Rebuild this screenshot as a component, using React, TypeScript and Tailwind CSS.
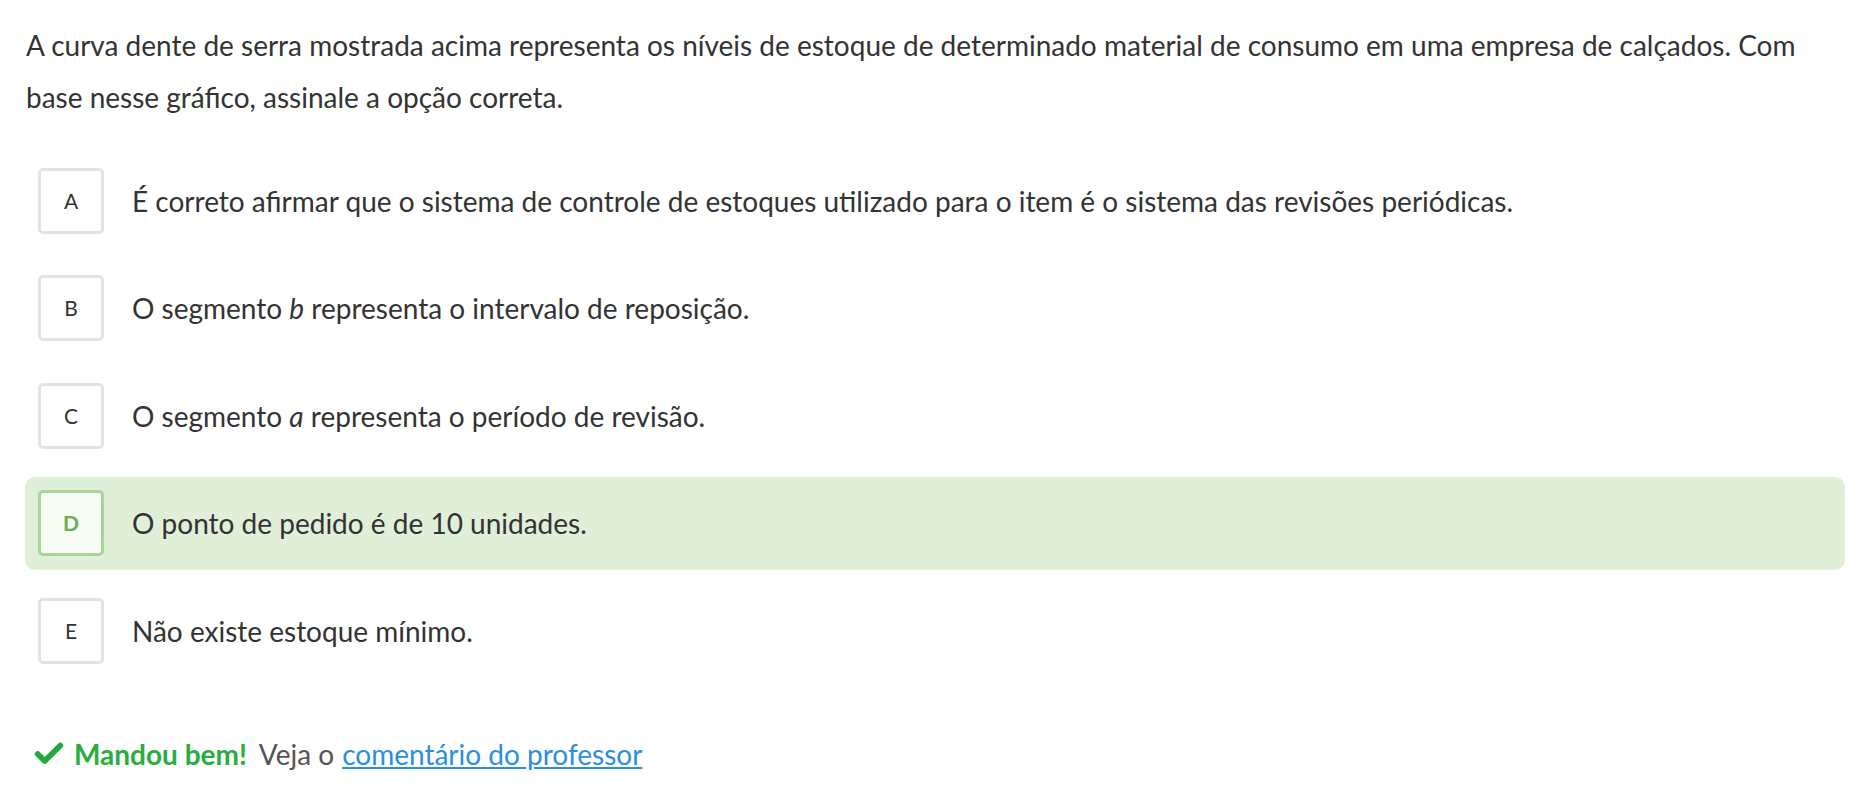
import { Check } from "lucide-react";

type Option = {
  letter: string;
  text: React.ReactNode;
  correct?: boolean;
};

const options: Option[] = [
  {
    letter: "A",
    text: "É correto afirmar que o sistema de controle de estoques utilizado para o item é o sistema das revisões periódicas.",
  },
  {
    letter: "B",
    text: (
      <>
        O segmento <i>b</i> representa o intervalo de reposição.
      </>
    ),
  },
  {
    letter: "C",
    text: (
      <>
        O segmento <i>a</i> representa o período de revisão.
      </>
    ),
  },
  { letter: "D", text: "O ponto de pedido é de 10 unidades.", correct: true },
  { letter: "E", text: "Não existe estoque mínimo." },
];

export default function App() {
  return (
    <div
      className="min-h-screen bg-white pl-[25px] pr-[25px] pt-[19px] text-[#333]"
      style={{ fontFamily: "Lato, 'Liberation Sans', sans-serif" }}
    >
      {/* Question */}
      <p className="max-w-[1800px] pl-px text-[28px] leading-[52px]">
        A curva dente de serra mostrada acima representa os níveis de estoque de determinado material de consumo em uma empresa de calçados. Com base nesse gráfico, assinale a opção correta.
      </p>

      {/* Options */}
      <div className="mt-[31px] flex flex-col gap-[14.5px]">
        {options.map((o) => (
          <div
            key={o.letter}
            className={`flex h-[93px] items-center rounded-[10px] px-[13px] ${
              o.correct ? "bg-[#dfefd8]" : ""
            }`}
          >
            <div
              className={`flex h-[66px] w-[66px] shrink-0 items-center justify-center rounded-[5px] border-[3px] text-[21px] ${
                o.correct
                  ? "border-[#a8d49a] bg-[#f6fbf4] font-bold text-[#6aae4d]"
                  : "border-[#e3e3e3] bg-white text-[#333]"
              }`}
            >
              {o.letter}
            </div>
            <span className="ml-[28px] text-[28px]">{o.text}</span>
          </div>
        ))}
      </div>

      {/* Feedback */}
      <div className="mt-[56px] flex items-center text-[28px]">
        <Check className="ml-[7px] h-[34px] w-[34px] text-[#22aa3a]" strokeWidth={4} />
        <span className="ml-[8px] font-bold text-[#2bac3f]">Mandou bem!</span>
        <span className="ml-[12px] text-[#555]">Veja o</span>
        <a href="#" className="ml-[8px] text-[#2b8fe0] underline">
          comentário do professor
        </a>
      </div>
    </div>
  );
}
